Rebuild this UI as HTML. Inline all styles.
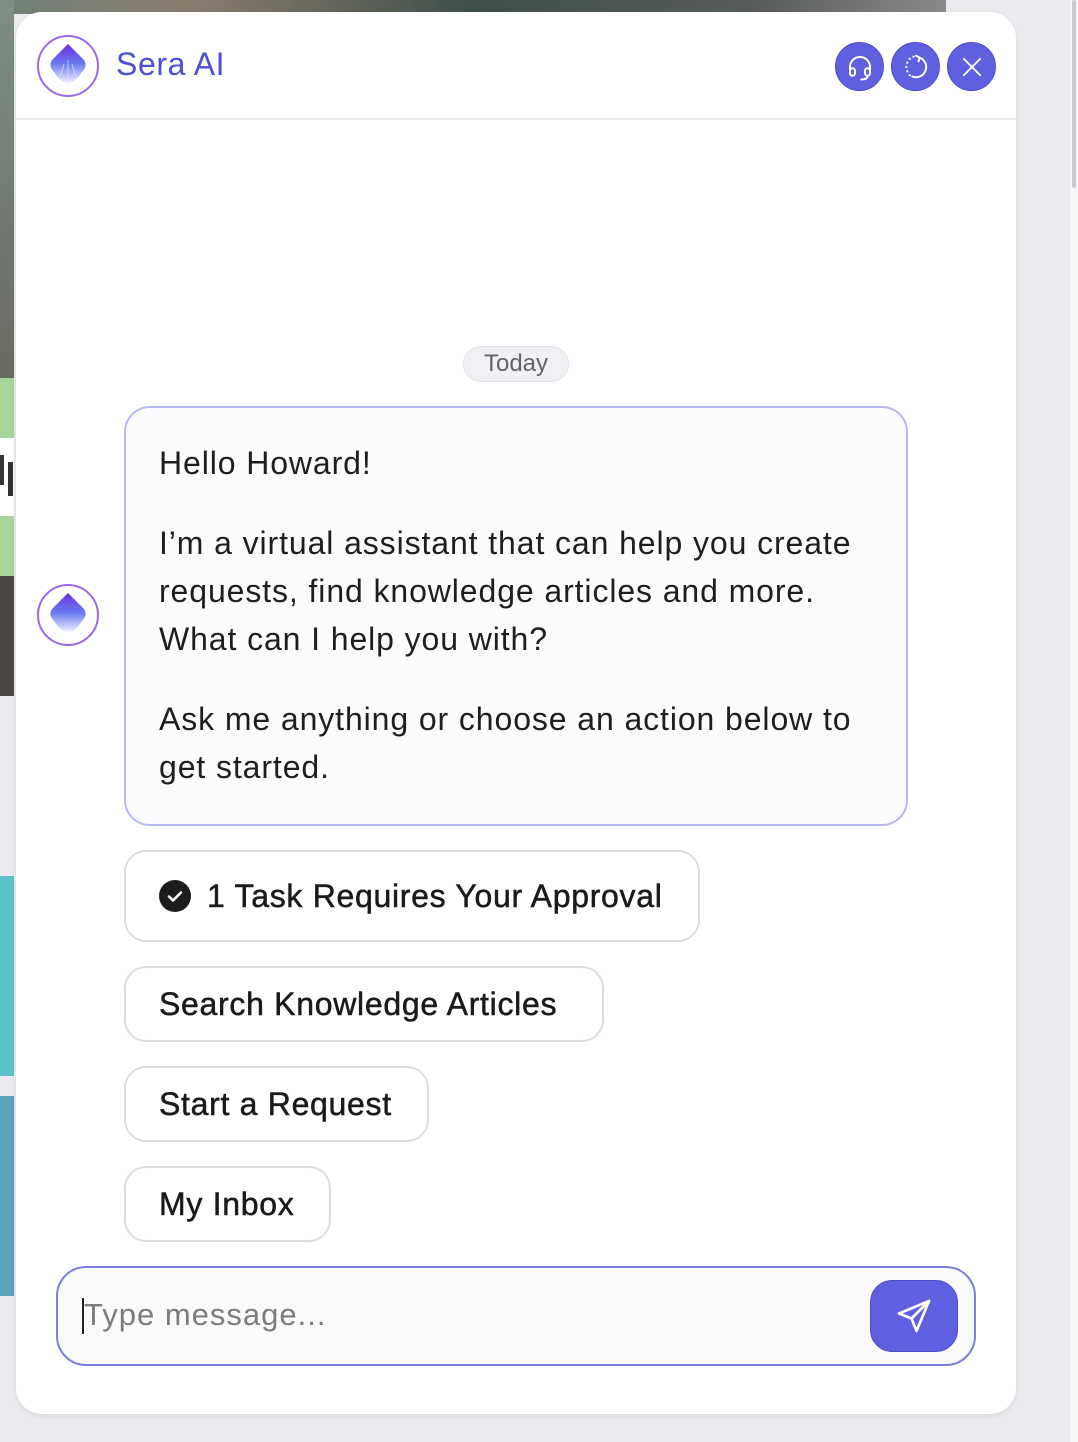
<!DOCTYPE html>
<html><head><meta charset="utf-8"><style>
*{margin:0;padding:0;box-sizing:border-box}
body{width:1078px;height:1442px;background:#e9ebee;position:relative;overflow:hidden;font-family:"Liberation Sans",sans-serif;color:#1c1c1e}
.a{position:absolute}
.panel{left:16px;top:12px;width:1000px;height:1402px;background:#fff;border-radius:26px;box-shadow:0 2px 6px rgba(0,0,0,.08)}
.t{position:absolute;font-size:32px;letter-spacing:0.9px;white-space:nowrap;color:#1e1e20}
.chip{position:absolute;border:2px solid #dcdcde;border-radius:22px;background:#fff;font-size:32px;color:#1a1a1c;padding-left:33px;display:flex;align-items:center;letter-spacing:.7px;-webkit-text-stroke:0.5px #1a1a1c}
.btn{position:absolute;top:42px;width:49px;height:49px;border-radius:50%;background:#5f60e0;border:1.5px solid #4d4ec4;display:flex;align-items:center;justify-content:center}
</style></head><body>
<div class="a" style="left:0;top:0;width:946px;height:14px;background:linear-gradient(90deg,#6f7f78,#8a7d6e 20%,#3f4f4a 50%,#585c5c 80%,#8a8a88)"></div>
<div class="a" style="left:0;top:0;width:14px;height:378px;background:linear-gradient(#7d8f86,#6a6a62)"></div>
<div class="a" style="left:0;top:378px;width:14px;height:60px;background:#a6d49a"></div>
<div class="a" style="left:0;top:438px;width:14px;height:78px;background:#fff"></div>
<div class="a" style="left:0;top:455px;width:4px;height:30px;background:#333"></div>
<div class="a" style="left:8px;top:462px;width:5px;height:34px;background:#333"></div>
<div class="a" style="left:0;top:516px;width:14px;height:60px;background:#a6d49a"></div>
<div class="a" style="left:0;top:576px;width:14px;height:120px;background:#4a4540"></div>
<div class="a" style="left:0;top:876px;width:14px;height:200px;background:#5cc0c6"></div>
<div class="a" style="left:0;top:1096px;width:14px;height:200px;background:#5ba3bd"></div>
<div class="a" style="left:1070px;top:0;width:8px;height:1442px;background:#f4f5f6"></div>
<div class="a" style="left:1072px;top:0;width:4px;height:188px;background:#c9cbce;border-radius:2px"></div>

<div class="a panel"></div>
<svg class="a" style="left:36px;top:34px" width="64" height="64" viewBox="0 0 64 64">
<defs><linearGradient id="g" x1="0" y1="0" x2="0" y2="1"><stop offset="0" stop-color="#6a2ee0"/><stop offset=".5" stop-color="#6a78f0"/><stop offset="1" stop-color="#eef0ff"/></linearGradient></defs>
<circle cx="32" cy="32" r="30" fill="#fff" stroke="#9a6be8" stroke-width="2"/>
<path d="M32 10 L48 26 Q52 32 46 38 Q40 48 32 49 Q24 48 18 38 Q12 32 16 26 Z" fill="url(#g)"/>
<path d="M32 26 V48 M28 30 Q26 40 22 44 M36 30 Q38 40 42 44" stroke="#dfe3ff" stroke-width="1" fill="none" opacity=".7"/>
</svg>
<div class="a" style="left:116px;top:46px;font-size:32px;color:#4d4ed6;letter-spacing:.6px">Sera AI</div>
<div class="btn" style="left:835px"><svg width="30" height="30" viewBox="0 0 24 24" fill="none" stroke="#fff" stroke-width="1.6" stroke-linecap="round"><path d="M4 15v-3a8 8 0 0 1 16 0v3"/><rect x="4" y="13" width="4" height="6" rx="2"/><rect x="16" y="13" width="4" height="6" rx="2"/><path d="M18 19q0 3-5 3"/></svg></div>
<div class="btn" style="left:891px"><svg width="30" height="30" viewBox="0 0 24 24" fill="none" stroke="#fff" stroke-width="1.6" stroke-linecap="round"><path d="M15 4.5A8 8 0 1 1 9 19.6"/><path d="M15 4.5l-3-1.5M15 4.5l-1 3"/><path d="M7 18.5l0 0M5 15.5l0 0M4.3 12l0 0M5 8.5l0 0M7 5.5l0 0M10 3.8l0 0" stroke-width="1.8"/></svg></div>
<div class="btn" style="left:947px"><svg width="28" height="28" viewBox="0 0 24 24" fill="none" stroke="#fff" stroke-width="1.6" stroke-linecap="round"><path d="M5 5l14 14M19 5L5 19"/></svg></div>
<div class="a" style="left:16px;top:118px;width:1000px;height:2px;background:#e8e8ea"></div>

<div class="a" style="left:463px;top:346px;width:106px;height:36px;border-radius:18px;background:#f0f1f4;border:1.5px solid #e3e4e8;font-size:24px;color:#636469;text-align:center;line-height:33px">Today</div>

<svg class="a" style="left:36px;top:583px" width="64" height="64" viewBox="0 0 64 64">
<circle cx="32" cy="32" r="30" fill="#fff" stroke="#9a6be8" stroke-width="2"/>
<path d="M32 10 L48 26 Q52 32 46 38 Q40 48 32 49 Q24 48 18 38 Q12 32 16 26 Z" fill="url(#g)"/>
</svg>

<div class="a" style="left:124px;top:406px;width:784px;height:420px;border:2px solid #b6b9ee;border-radius:26px;background:#fbfbfd"></div>
<div class="t" style="left:159px;top:445px">Hello Howard!</div>
<div class="t" style="left:159px;top:525px">I’m a virtual assistant that can help you create</div>
<div class="t" style="left:159px;top:573px">requests, find knowledge articles and more.</div>
<div class="t" style="left:159px;top:621px">What can I help you with?</div>
<div class="t" style="left:159px;top:701px">Ask me anything or choose an action below to</div>
<div class="t" style="left:159px;top:749px">get started.</div>

<div class="chip" style="left:124px;top:850px;width:576px;height:92px"><svg width="32" height="32" viewBox="0 0 32 32" style="margin-right:16px"><circle cx="16" cy="16" r="16" fill="#1c1c1e"/><path d="M10 16.5l4 4 8-8" stroke="#fff" stroke-width="2.6" fill="none" stroke-linecap="round" stroke-linejoin="round"/></svg>1 Task Requires Your Approval</div>
<div class="chip" style="left:124px;top:966px;width:480px;height:76px">Search Knowledge Articles</div>
<div class="chip" style="left:124px;top:1066px;width:305px;height:76px">Start a Request</div>
<div class="chip" style="left:124px;top:1166px;width:207px;height:76px">My Inbox</div>

<div class="a" style="left:56px;top:1266px;width:920px;height:100px;border:2px solid #7c7fdf;border-radius:30px;background:#fafafb"></div>
<div class="a" style="left:82px;top:1298px;width:2px;height:36px;background:#222"></div>
<div class="a" style="left:84px;top:1297px;font-size:31px;color:#7b7c80;letter-spacing:1px">Type message...</div>
<div class="a" style="left:870px;top:1280px;width:88px;height:72px;border-radius:22px;background:#5f60e0;border:1.5px solid #4d4ec4;display:flex;align-items:center;justify-content:center"><svg width="40" height="40" viewBox="0 0 24 24" fill="none" stroke="#fff" stroke-width="1.6" stroke-linejoin="round" stroke-linecap="round"><path d="M21 3L3 10.5l7.5 3L13.5 21z"/><path d="M10.5 13.5L21 3"/></svg></div>
</body></html>
